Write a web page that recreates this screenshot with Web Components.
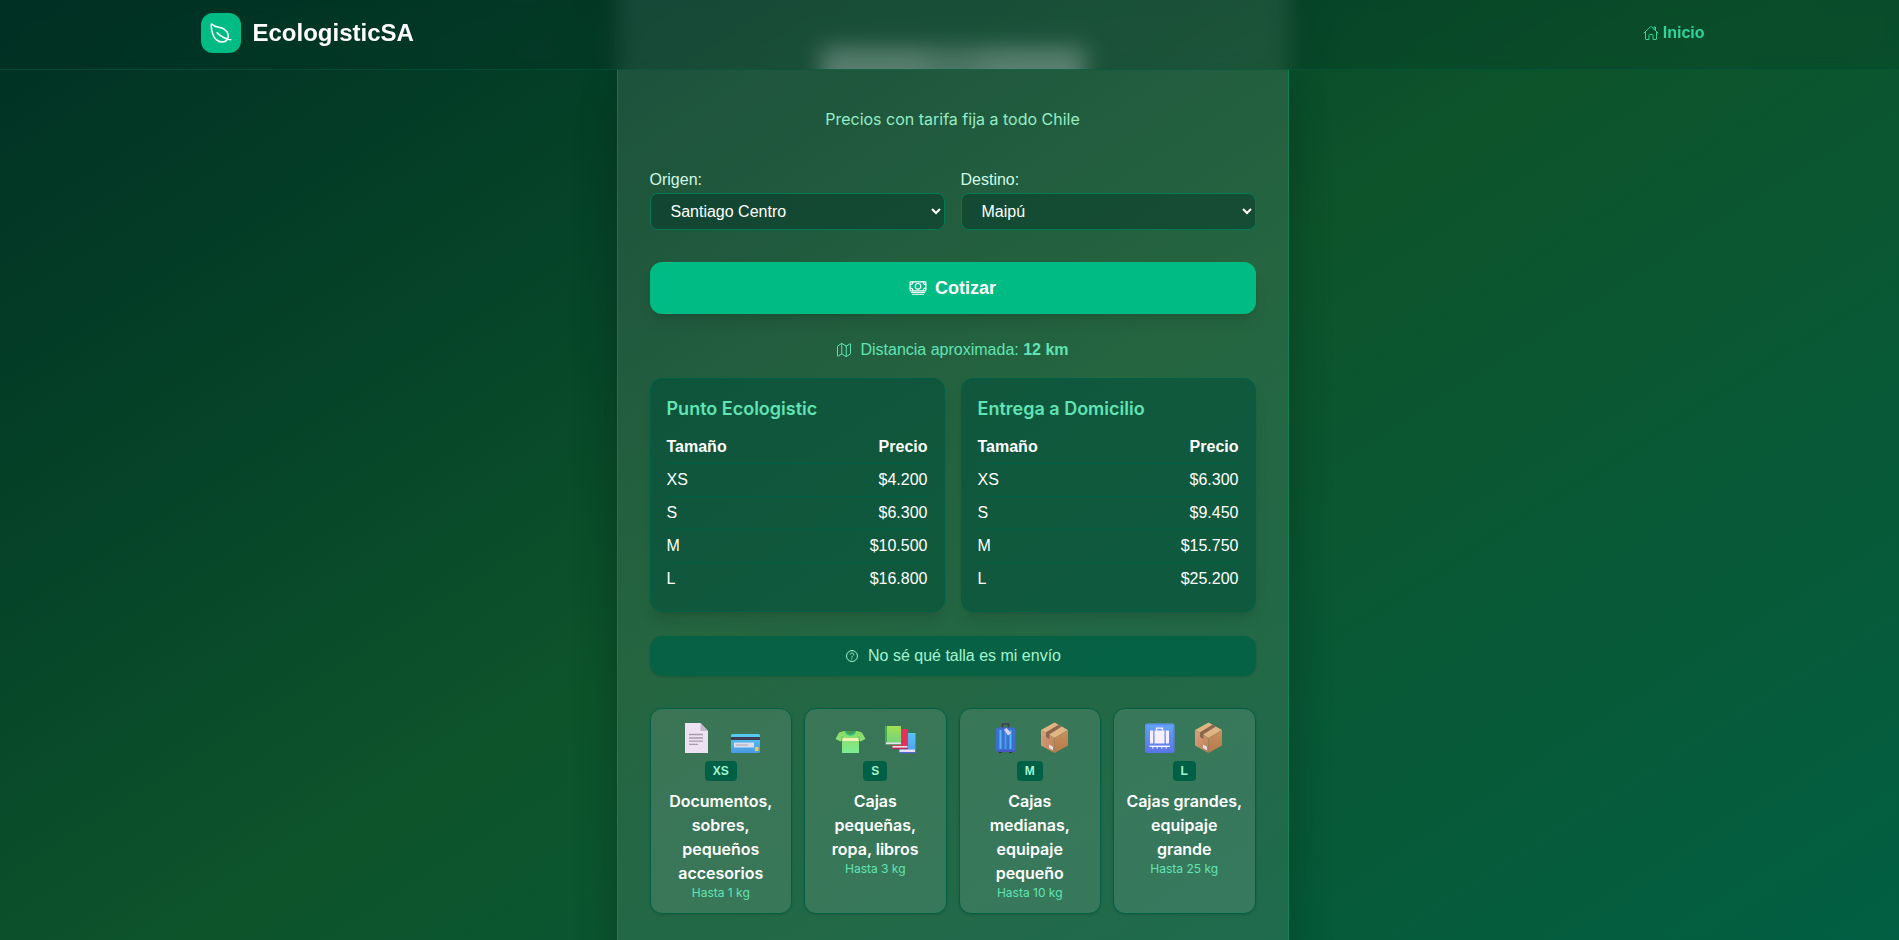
<!DOCTYPE html>
<html lang="es">
<head>
<meta charset="utf-8">
<meta name="viewport" content="width=device-width, initial-scale=1">
<title>EcologisticSA</title>
<style>
  :root {
    --sans: "Liberation Sans", Arial, sans-serif;
    --inter: Inter, "Liberation Sans", sans-serif;
    --e200: #a4f4cf;
    --e300: #61e4b4;
    --e400: #2fd69b;
    --e500: #00bb83;
    --e700: #007a55;
    --e800: #006045;
    --e900: #004f3b;
    --shift: 6px;
    scrollbar-width: none;
  }
  body {
    margin: 0;
    font: 16px/24px var(--sans);
    color: #fff;
    background: #006045;
  }
</style>
</head>
<body>
<site-header></site-header>
<quote-page></quote-page>

<script>
const define = (name, html, setup) => {
  const tpl = document.createElement('template');
  tpl.innerHTML = '<style>*{box-sizing:border-box}:host{display:block}</style>' + html;
  customElements.define(name, class extends HTMLElement {
    connectedCallback() {
      if (this.shadowRoot) return;
      const root = this.attachShadow({ mode: 'open' });
      root.append(tpl.content.cloneNode(true));
      if (setup) setup(this, root);
    }
  });
};

const LINE = {
  home: '<path d="M80 212v236a16 16 0 0016 16h96V328a24 24 0 0124-24h80a24 24 0 0124 24v136h96a16 16 0 0016-16V212"/><path d="M480 256L266.89 52c-5-5.28-16.69-5.34-21.78 0L32 256M400 179V64h-48v69"/>',
  leaf: '<path d="M321.89 171.42C233 114 141 155.22 56 65.22c-19.8-21-8.3 235.5 98.1 332.7 77.79 71 197.9 63.08 238.4-5.92s18.28-163.17-70.61-220.58zM173 253c86 81 175 129 292 147"/>',
  cash: '<rect x="32" y="80" width="448" height="256" rx="16"/><path d="M64 384h384M96 432h320"/><circle cx="256" cy="208" r="80"/><path d="M480 160a80 80 0 01-80-80M32 160a80 80 0 0080-80M480 256a80 80 0 00-80 80M32 256a80 80 0 0180 80"/>',
  map: '<path d="M313.27 124.64L198.73 51.36a32 32 0 00-29.28.35L56.51 127.49A16 16 0 0048 141.63v295.8a16 16 0 0023.49 14.14l97.82-63.79a32 32 0 0129.5-.24l111.86 73a32 32 0 0029.27-.11l115.43-75.94a16 16 0 008.63-14.2V74.57a16 16 0 00-23.49-14.14l-98 63.86a32 32 0 01-29.24.35zM328 128v336M184 48v336"/>',
  help: '<path d="M256 80a176 176 0 10176 176A176 176 0 00256 80z"/><path d="M200 202.29s.84-17.5 19.57-32.57C230.68 160.77 244 158.18 256 158c10.93-.14 20.69 1.67 26.53 4.45 10 4.76 29.47 16.38 29.47 41.09 0 26-17 37.81-36.37 50.8S251 281.43 251 296" stroke-width="28"/><circle cx="250" cy="348" r="20" fill="currentColor" stroke="none"/>'
};

define('line-icon', `
  <style>
    :host { width: var(--size, 16px); height: var(--size, 16px); flex: none; }
    svg { display: block; width: 100%; height: 100%; fill: none; stroke: currentColor; stroke-width: 32; stroke-linecap: round; stroke-linejoin: round; }
  </style>
  <svg viewBox="0 0 512 512" aria-hidden="true"></svg>`,
  (el, root) => { root.querySelector('svg').innerHTML = LINE[el.getAttribute('name')]; });

const PARCEL = `
  <defs>
    <linearGradient id="pl" x1="0" y1="0" x2="1" y2="1"><stop offset="0" stop-color="#dba07e"/><stop offset="1" stop-color="#bb7f55"/></linearGradient>
    <linearGradient id="pr" x1="0" y1="0" x2="0" y2="1"><stop offset="0" stop-color="#c69060"/><stop offset="1" stop-color="#b87b48"/></linearGradient>
  </defs>
  <path d="M16.500 1.500 30 9 16.500 17 3 9z" fill="#dfb582"/>
  <path d="M3 9l13.500 8v15L3 24.500z" fill="url(#pl)"/>
  <path d="M30 9l-13.500 8v15L30 24.500z" fill="url(#pr)"/>
  <path d="M20.500 3.700 24 5.600 11.500 13.200v4.800L8 16v-4.800z" fill="#8d6650"/>
  <path d="M11 23.500l4 2.300v3.400l-4-2.300z" fill="#eadbe8"/>`;

const PICTURES = {
  document: `
    <path d="M5 2h15.500l7.500 8v22H5z" fill="#ece2f1"/>
    <path d="M20.500 2 28 10h-7.500z" fill="#c3b5cb"/>
    <path d="M9 13.500h14M9 17h14M9 20.200h14M9 23.400h9" stroke="#a69cad" stroke-width="1.300"/>`,
  card: `
    <defs><linearGradient id="cc" x1="0" y1="0" x2="0" y2="1"><stop offset="0" stop-color="#56cdf0"/><stop offset="1" stop-color="#4b97e4"/></linearGradient></defs>
    <rect x="2" y="13" width="29" height="19" rx="1.500" fill="url(#cc)"/>
    <path d="M2 16h29v3H2z" fill="#413b50"/>
    <path d="M5 21.500h20v5H5z" fill="#d9dcea"/>
    <path d="M7 24h12" stroke="#a9a6b5" stroke-width="1"/>
    <rect x="26" y="26" width="3.500" height="4" rx=".5" fill="#f3c944"/>`,
  shirt: `
    <defs><linearGradient id="sh" x1="0" y1="0" x2="0" y2="1"><stop offset="0" stop-color="#8edb62"/><stop offset="1" stop-color="#7cec94"/></linearGradient></defs>
    <path d="M10 10h13l5 1.500 3.500 6.500-5 2.500L25 19v13H8V19l-1.500 1.500-5-2.500L5 11.500z" fill="url(#sh)"/>
    <path d="M8 17h17v3H8z" fill="#eef0b4"/>
    <path d="M11.500 10c.8 5.200 9.200 5.200 10 0" fill="#4a9c4d" stroke="#26c08a" stroke-width="1.500"/>
    <path d="M8 15v4M25 15v4" stroke="#66b54d" stroke-width=".8"/>`,
  books: `
    <defs>
      <linearGradient id="bg" x1="0" y1="0" x2="0" y2="1"><stop offset="0" stop-color="#a0e052"/><stop offset="1" stop-color="#6ed384"/></linearGradient>
      <linearGradient id="bb" x1="0" y1="0" x2="0" y2="1"><stop offset="0" stop-color="#56c4f4"/><stop offset="1" stop-color="#4c9ef0"/></linearGradient>
    </defs>
    <g transform="translate(1.500 0)">
    <path d="M15 12h16v20H15z" fill="url(#bb)"/><path d="M15 28.500h15.500v2.500H15z" fill="#e7e0f8"/><path d="M15 31h16v1.300H15z" fill="#5366cf"/>
    <path d="M8 8h15.500v20H8z" fill="#e0325d"/><path d="M8 25h15v1.800H8z" fill="#f0d9e6"/><path d="M8 26.800h15.500v1.400H8z" fill="#bb2858"/>
    <path d="M1 5h15.500v19H1z" fill="url(#bg)"/><path d="M1 5h1.500v19H1z" fill="#46aa4d"/><path d="M1.500 21.500h15v1.700h-15z" fill="#e6e3ef"/><path d="M1 23.200h15.500v1H1z" fill="#6b8b68"/>
    </g>`,
  suitcase: `
    <path d="M13.500 7V3h6v4" fill="none" stroke="#453c52" stroke-width="1.500"/>
    <path d="M10 30h3v2h-3zM20 30h3v2h-3z" fill="#352e44"/>
    <rect x="7" y="6.500" width="19.500" height="24.500" rx="2.500" fill="#3d6fd3"/>
    <path d="M11.500 9v19M21.500 9v19" stroke="#4fb9ef" stroke-width="2"/>
    <path d="M16.500 9v19" stroke="#45a0ea" stroke-width="1.800"/>
    <path d="M8 30h18" stroke="#4b4fbe" stroke-width="1.500"/>
    <path d="M15 8.500l2.500-1.500 4.500 5-3 2.500z" fill="#ddd0e8"/>`,
  luggage: `
    <defs><linearGradient id="lg" x1="0" y1="0" x2="0" y2="1"><stop offset="0" stop-color="#62a5fb"/><stop offset="1" stop-color="#5b74e8"/></linearGradient></defs>
    <rect x="2" y="2.500" width="29.500" height="29.500" rx="2.500" fill="url(#lg)"/>
    <rect x="3" y="3.500" width="27.500" height="27.500" rx="1.500" fill="none" stroke="#5576df" stroke-opacity=".5"/>
    <path d="M13.500 9.500V7.200h6v2.300" fill="none" stroke="#f8effd" stroke-width="1.300"/>
    <path d="M11.500 9.500h10v13h-10zM7 9.500h3.200v13H7.800a.8.8 0 01-.8-.8zM22.800 9.500H26v12.200a.8.8 0 01-.8.8h-2.400z" fill="#f8effd"/>
    <path d="M6.500 25.300h20.500" stroke="#f8effd" stroke-width="1.500"/>
    <path d="M9 26.800h16" stroke="#f8effd" stroke-width="1.300" stroke-dasharray="1.500 3"/>`,
  parcel: PARCEL
};

define('parcel-picture', `
  <style>:host { width: 33px; height: 33px; } svg { display: block; width: 100%; height: 100%; }</style>
  <svg viewBox="0 0 33 33" aria-hidden="true"></svg>`,
  (el, root) => { root.querySelector('svg').innerHTML = PICTURES[el.getAttribute('name')]; });

define('site-header', `
  <style>
    :host { position: fixed; inset: 0 0 auto; z-index: 10; padding: 13px 16px 16px calc(16px + var(--shift));
      background: rgb(0 44 34 / .2); border-bottom: 1px solid rgb(0 96 69 / .5);
      -webkit-backdrop-filter: blur(8px); backdrop-filter: blur(8px); }
    nav { max-width: 1504px; margin: 0 auto; display: flex; align-items: center; justify-content: space-between; }
    a { display: flex; align-items: center; text-decoration: none; font-weight: 700; }
    .brand { gap: 12px; color: #fff; font-size: 24px; line-height: 32px; }
    .logo { display: grid; place-items: center; width: 40px; height: 40px; border-radius: 12px; background: var(--e500); --size: 24px; }
    .link { gap: 4px; color: var(--e400); }
  </style>
  <nav>
    <a class="brand" href="#"><span class="logo"><line-icon name="leaf"></line-icon></span>EcologisticSA</a>
    <a class="link" href="#"><line-icon name="home"></line-icon>Inicio</a>
  </nav>`);

define('place-field', `
  <style>
    :host { display: flex; flex-direction: column; gap: 1px; }
    label { color: #d0fae5; }
    select { width: 100%; padding: 8px 16px; font: 16px/normal var(--sans); color: #fff;
      background: rgb(0 44 34 / .4); border: 1px solid var(--e700); border-radius: 8px; }
    option { background: #004f3b; }
  </style>
  <label for="place"></label>
  <select id="place"></select>`,
  (el, root) => {
    root.querySelector('label').textContent = el.getAttribute('label');
    root.querySelector('select').add(new Option(el.getAttribute('value')));
  });

define('price-card', `
  <style>
    :host { padding: 16px; background: rgb(0 79 59 / .55); border: 1px solid var(--e800); border-radius: 12px;
      box-shadow: 0 10px 15px -3px rgb(0 0 0 / .1), 0 4px 6px -4px rgb(0 0 0 / .1); }
    h3 { margin: 0 0 8px; font: 600 18px/28px var(--inter); color: var(--e300); }
    table { width: 100%; border-collapse: separate; border-spacing: 0; }
    th, td { padding: 4px 0; text-align: left; line-height: 24px; border-bottom: 1px solid var(--e800); }
    tr > :last-child { text-align: right; }
    tbody tr:last-child td { border-bottom: 0; }
  </style>
  <h3><slot></slot></h3>
  <table>
    <thead><tr><th scope="col">Tamaño</th><th scope="col">Precio</th></tr></thead>
    <tbody></tbody>
  </table>`,
  (el, root) => {
    const body = root.querySelector('tbody');
    el.getAttribute('prices').split(' ').forEach((price, i) => {
      const row = body.insertRow();
      row.insertCell().textContent = ['XS', 'S', 'M', 'L'][i];
      row.insertCell().textContent = price;
    });
  });

define('size-card', `
  <style>
    :host { display: flex; flex-direction: column; align-items: center; padding: 12px 11px; text-align: center;
      background: rgb(255 255 255 / .1); border: 1px solid var(--e800); border-radius: 12px;
      box-shadow: 0 1px 3px rgb(0 0 0 / .1), 0 1px 2px -1px rgb(0 0 0 / .1); }
    .art { display: flex; gap: 16px; height: 32px; margin-bottom: 8px; }
    .tag { margin-bottom: 8px; padding: 2px 8px; border-radius: 4px; background: var(--e800); color: var(--e200);
      font-weight: 700; font-size: 12px; line-height: 16px; }
    .text { font: 600 16px/24px var(--inter); }
    .max { font: 12px/16px var(--inter); color: var(--e300); }
  </style>
  <div class="art"></div>
  <span class="tag"></span>
  <span class="text"><slot></slot></span>
  <span class="max"></span>`,
  (el, root) => {
    for (const name of el.getAttribute('art').split(' ')) {
      const pic = document.createElement('parcel-picture');
      pic.setAttribute('name', name);
      root.querySelector('.art').append(pic);
    }
    root.querySelector('.tag').textContent = el.getAttribute('size');
    root.querySelector('.max').textContent = el.getAttribute('max');
  });

define('quote-page', `
  <style>
    :host { min-height: 100vh; padding: 0 16px 0 calc(16px + var(--shift)); overflow: hidden;
      background: #006045 linear-gradient(to bottom right in oklab, #002c22, #0d542b, #006045) 0 -130px / 100% 1200px no-repeat; }
    .column { max-width: 672px; margin: 0 auto; }
    main { padding: 38px 32px 64px; background: rgb(255 255 255 / .1);
      border: 1px solid rgb(0 153 102 / .5); border-width: 0 1px;
      box-shadow: 0 25px 50px -12px rgb(0 0 0 / .25), 0 0 40px rgb(0 0 0 / .1);
      clip-path: inset(0 -100px); }
    /* the part of the card that has gone under the frosted header */
    .under { height: 69px; margin: 0 -60px; padding: 0 60px; overflow: hidden; }
    .glass { height: 140px; margin-top: -36px; padding-top: 84px; background: rgb(255 255 255 / .1); filter: blur(9px);
      box-shadow: 0 0 40px rgb(0 0 0 / .2); }
    .glow { width: 264px; height: 56px; margin: 0 auto;
      background: linear-gradient(90deg, rgb(255 255 255 / .38) 36%, rgb(255 255 255 / .3) 44% 56%, rgb(255 255 255 / .38) 64%); }
    .lead { margin: 0 0 37px; text-align: center; font-family: var(--inter); color: #96ecc4; }
    .pair { display: grid; grid-template-columns: 1fr 1fr; gap: 16px; }
    button { display: flex; align-items: center; justify-content: center; gap: 8px; width: 100%; border: 0; border-radius: 12px; cursor: pointer; }
    .go { margin: 32px 0 24px; padding: 12px; background: var(--e500); color: #fff; font: 700 18px/28px var(--sans); --size: 18px;
      box-shadow: 0 10px 15px -3px rgb(0 0 0 / .1), 0 4px 6px -4px rgb(0 0 0 / .1); }
    .distance { display: flex; align-items: center; justify-content: center; gap: 8px; margin: 0 0 16px; color: var(--e300); }
    .help { margin: 24px 0 32px; padding: 8px; background: rgb(0 96 69 / .8); color: var(--e200); font: 16px/24px var(--sans);
      box-shadow: 0 1px 3px rgb(0 0 0 / .1), 0 1px 2px -1px rgb(0 0 0 / .1); }
    .sizes { display: grid; grid-template-columns: repeat(4, 1fr); gap: 12px; }
  </style>
  <div class="column">
  <div class="under" aria-hidden="true"><div class="glass"><div class="glow"></div></div></div>
  <main>
    <p class="lead">Precios con tarifa fija a todo Chile</p>
    <div class="pair">
      <place-field label="Origen:" value="Santiago Centro"></place-field>
      <place-field label="Destino:" value="Maipú"></place-field>
    </div>
    <button class="go" type="button"><line-icon name="cash"></line-icon>Cotizar</button>
    <p class="distance"><line-icon name="map"></line-icon><span>Distancia aproximada: <b>12 km</b></span></p>
    <div class="pair">
      <price-card prices="$4.200 $6.300 $10.500 $16.800">Punto Ecologistic</price-card>
      <price-card prices="$6.300 $9.450 $15.750 $25.200">Entrega a Domicilio</price-card>
    </div>
    <button class="help" type="button"><line-icon name="help"></line-icon>No sé qué talla es mi envío</button>
    <div class="sizes">
      <size-card size="XS" max="Hasta 1 kg" art="document card">Documentos, sobres, pequeños accesorios</size-card>
      <size-card size="S" max="Hasta 3 kg" art="shirt books">Cajas pequeñas, ropa, libros</size-card>
      <size-card size="M" max="Hasta 10 kg" art="suitcase parcel">Cajas medianas, equipaje pequeño</size-card>
      <size-card size="L" max="Hasta 25 kg" art="luggage parcel">Cajas grandes, equipaje grande</size-card>
    </div>
  </main>
  </div>`);
</script>
</body>
</html>
